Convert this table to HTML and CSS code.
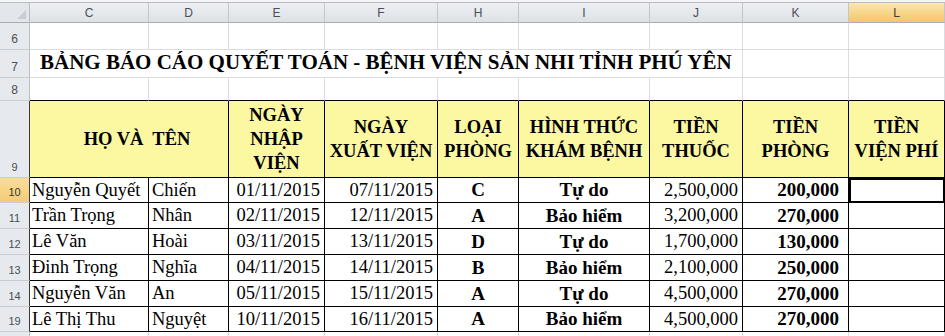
FILE: index.html
```html
<!DOCTYPE html>
<html lang="vi">
<head>
<meta charset="utf-8">
<title>Bảng báo cáo quyết toán</title>
<link rel="stylesheet" href="styles.css">
</head>
<body>
<div class="sheet">
  <div class="strip"></div>

  <div class="corner"><span class="tri"></span></div>
  <div class="ch">C</div><div class="ch">D</div><div class="ch">E</div><div class="ch">F</div>
  <div class="ch">H</div><div class="ch">I</div><div class="ch">J</div><div class="ch">K</div>
  <div class="ch sel">L</div>

  <div class="rh">6</div>
  <div class="c"></div><div class="c"></div><div class="c"></div><div class="c"></div><div class="c"></div>
  <div class="c"></div><div class="c"></div><div class="c"></div><div class="c"></div>

  <div class="rh">7</div>
  <div class="c title">BẢNG BÁO CÁO QUYẾT TOÁN - BỆNH VIỆN SẢN NHI TỈNH PHÚ YÊN</div>
  <div class="c"></div><div class="c"></div>

  <div class="rh">8</div>
  <div class="c top"></div><div class="c top"></div><div class="c top"></div><div class="c top"></div><div class="c top"></div>
  <div class="c top"></div><div class="c top"></div><div class="c top"></div><div class="c top"></div>

  <div class="rh tb">9</div>
  <div class="c t hd span2">HỌ VÀ&nbsp; TÊN</div>
  <div class="c t hd">NGÀY<br>NHẬP<br>VIỆN</div>
  <div class="c t hd">NGÀY<br>XUẤT VIỆN</div>
  <div class="c t hd">LOẠI<br>PHÒNG</div>
  <div class="c t hd">HÌNH THỨC<br>KHÁM BỆNH</div>
  <div class="c t hd">TIỀN<br>THUỐC</div>
  <div class="c t hd">TIỀN<br>PHÒNG</div>
  <div class="c t hd">TIỀN<br>VIỆN PHÍ</div>

  <div class="rh tb sel">10</div>
  <div class="c t l">Nguyễn Quyết</div><div class="c t l2">Chiến</div>
  <div class="c t r">01/11/2015</div><div class="c t r">07/11/2015</div>
  <div class="c t m b">C</div><div class="c t m b">Tự do</div>
  <div class="c t r">2,500,000</div><div class="c t r b rk">200,000</div>
  <div class="c t active"></div>

  <div class="rh tb">11</div>
  <div class="c t l">Trần Trọng</div><div class="c t l2">Nhân</div>
  <div class="c t r">02/11/2015</div><div class="c t r">12/11/2015</div>
  <div class="c t m b">A</div><div class="c t m b">Bảo hiểm</div>
  <div class="c t r">3,200,000</div><div class="c t r b rk">270,000</div>
  <div class="c t"></div>

  <div class="rh tb">12</div>
  <div class="c t l">Lê Văn</div><div class="c t l2">Hoài</div>
  <div class="c t r">03/11/2015</div><div class="c t r">13/11/2015</div>
  <div class="c t m b">D</div><div class="c t m b">Tự do</div>
  <div class="c t r">1,700,000</div><div class="c t r b rk">130,000</div>
  <div class="c t"></div>

  <div class="rh tb">13</div>
  <div class="c t l">Đinh Trọng</div><div class="c t l2">Nghĩa</div>
  <div class="c t r">04/11/2015</div><div class="c t r">14/11/2015</div>
  <div class="c t m b">B</div><div class="c t m b">Bảo hiểm</div>
  <div class="c t r">2,100,000</div><div class="c t r b rk">250,000</div>
  <div class="c t"></div>

  <div class="rh tb">14</div>
  <div class="c t l">Nguyễn Văn</div><div class="c t l2">An</div>
  <div class="c t r">05/11/2015</div><div class="c t r">15/11/2015</div>
  <div class="c t m b">A</div><div class="c t m b">Tự do</div>
  <div class="c t r">4,500,000</div><div class="c t r b rk">270,000</div>
  <div class="c t"></div>

  <div class="rh tb">19</div>
  <div class="c t l">Lê Thị Thu</div><div class="c t l2">Nguyệt</div>
  <div class="c t r">10/11/2015</div><div class="c t r">16/11/2015</div>
  <div class="c t m b">A</div><div class="c t m b">Bảo hiểm</div>
  <div class="c t r">4,500,000</div><div class="c t r b rk">270,000</div>
  <div class="c t"></div>

  <div class="rh tail"></div>
  <div class="c tail"></div><div class="c tail"></div><div class="c tail"></div><div class="c tail"></div><div class="c tail"></div>
  <div class="c tail"></div><div class="c tail"></div><div class="c tail"></div><div class="c tail"></div>
</div>
</body>
</html>
```

FILE: styles.css
```css
* { box-sizing: border-box; }
html, body { margin: 0; padding: 0; background: #fff; }
body { width: 945px; height: 336px; overflow: hidden; }

.sheet {
  display: grid;
  grid-template-columns: 30px 119px 80px 96px 113px 81px 131px 93px 106px 96px;
  grid-template-rows: 3px 20px 27px 28px 23px 77px 25px 26px 26px 26px 26px 25px 4px;
  font-family: "Liberation Serif", "Times New Roman", serif;
  font-size: 18.5px;
  color: #000;
}

.strip {
  grid-column: 1 / -1;
  background: #f4f5f7;
  border-bottom: 1px solid #b9bdc3;
}

.corner {
  background: #e3e6ea;
  border-right: 1px solid #b9bdc3;
  border-bottom: 1px solid #a9aeb4;
  display: flex;
  align-items: flex-end;
  justify-content: flex-end;
  padding: 0 3px 3px 0;
}
.tri {
  width: 0;
  height: 0;
  border-left: 9px solid transparent;
  border-bottom: 9px solid #c9ccd0;
}

.ch {
  background: linear-gradient(#eef0f3, #dde1e6);
  border-right: 1px solid #c3c7cc;
  border-bottom: 1px solid #a9aeb4;
  font-family: "Liberation Sans", Arial, sans-serif;
  font-size: 12px;
  color: #4b4f55;
  display: flex;
  align-items: center;
  justify-content: center;
}
.ch.sel {
  background: linear-gradient(#fce6b0, #f3c766);
  color: #3a3a3a;
}

.rh {
  background: #e6e9ed;
  border-right: 1px solid #b9bdc3;
  border-bottom: 1px solid #c9cdd2;
  font-family: "Liberation Sans", Arial, sans-serif;
  font-size: 12px;
  line-height: 14px;
  color: #4b4f55;
  display: flex;
  align-items: flex-end;
  justify-content: center;
  padding-bottom: 3px;
}
.rh.tb { border-right-color: #3a3a3a; font-size: 11px; }
.rh.sel { background: linear-gradient(#f9dd97, #f3cd78); color: #333; }
.rh.tail { padding: 0; border-bottom: none; }

.c {
  border-right: 1px solid #dadcdf;
  border-bottom: 1px solid #dadcdf;
  background: #fff;
  display: flex;
  align-items: center;
  white-space: nowrap;
  overflow: hidden;
}
.c.top { border-bottom-color: #000; }
.c.tail { border-bottom: none; }

.title {
  grid-column: span 7;
  font-size: 21px;
  font-weight: bold;
  align-items: flex-end;
  padding: 0 0 2px 10px;
}

.t { border-right-color: #000; border-bottom-color: #000; }

.hd {
  background: #fbf8a1;
  font-weight: bold;
  line-height: 24px;
  justify-content: center;
  text-align: center;
}
.span2 { grid-column: span 2; padding-left: 16px; }

.l { padding-left: 2px; }
.l2 { padding-left: 3px; }
.r { justify-content: flex-end; padding-right: 4px; }
.rk { padding-right: 9px; }
.m { justify-content: center; }
.b { font-weight: bold; font-size: 19px; }

.active {
  box-shadow: inset 2px 2px 0 0 #000, inset -1px -1px 0 0 #000;
}
```
